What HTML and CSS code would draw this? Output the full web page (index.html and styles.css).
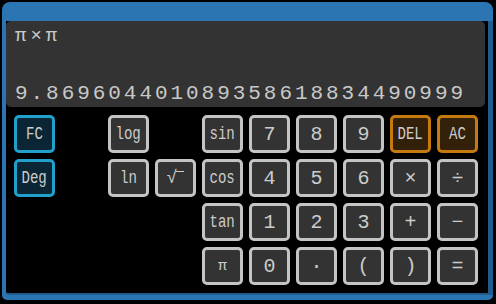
FILE: index.html
```html
<!DOCTYPE html>
<html lang="en">

<head>
    <title>Calculator</title>
    <link rel="stylesheet" href="styles.css">
</head>

<body>

    <div id="window">
        <div id="panel">

            <div id="display">
                <div class="expr">π×π</div>
                <div class="result">9.869604401089358618834490999</div>
            </div>

            <div id="keys">
                <button class="key blue"><span class="word">FC</span></button>
                <button class="key col3"><span class="word">log</span></button>
                <button class="key col5"><span class="word">sin</span></button>
                <button class="key">7</button>
                <button class="key">8</button>
                <button class="key">9</button>
                <button class="key orange"><span class="word">DEL</span></button>
                <button class="key orange"><span class="word">AC</span></button>

                <button class="key blue"><span class="word">Deg</span></button>
                <button class="key col3"><span class="word">ln</span></button>
                <button class="key"><span class="rad">√<span class="bar"></span></span></button>
                <button class="key"><span class="word">cos</span></button>
                <button class="key">4</button>
                <button class="key">5</button>
                <button class="key">6</button>
                <button class="key">×</button>
                <button class="key">÷</button>

                <button class="key col5"><span class="word">tan</span></button>
                <button class="key">1</button>
                <button class="key">2</button>
                <button class="key">3</button>
                <button class="key">+</button>
                <button class="key">−</button>

                <button class="key col5 small">π</button>
                <button class="key">0</button>
                <button class="key">·</button>
                <button class="key">(</button>
                <button class="key">)</button>
                <button class="key">=</button>
            </div>

        </div>
    </div>

</body>
</html>
```

FILE: styles.css
```css
body {
    margin: 0;
    padding: 2px;
    background-color: #000;
    font-family: 'Liberation Mono', 'DejaVu Sans Mono', monospace;
}

#window {
    width: 491px;
    height: 298px;
    box-sizing: border-box;
    padding: 19px 0 5px 4px;
    background-color: #2b76b2;
    border-radius: 8px 8px 5px 5px;
}

#panel {
    height: 100%;
    box-sizing: border-box;
    background-color: #000;
    border-right: 5px solid #1e5c8e;
    border-bottom: 2px solid #1e5c8e;
    border-radius: 0 0 0 3px;
}

#display {
    height: 86px;
    width: 479px;
    box-sizing: border-box;
    padding: 5px 9px 2px;
    background-color: #333;
    border-radius: 5px;
    display: flex;
    flex-direction: column;
    justify-content: space-between;
    color: #c8c8c8;
}

.expr {
    font-size: 19px;
    line-height: 20px;
    letter-spacing: 4px;
}

.result {
    font-size: 21px;
    line-height: 22px;
    letter-spacing: 2.95px;
}

#keys {
    display: grid;
    grid-template-columns: repeat(10, 41px);
    grid-auto-rows: 38px;
    gap: 6px;
    margin: 8px 0 0 8px;
}

.col3 {
    grid-column-start: 3;
}

.col5 {
    grid-column-start: 5;
}

.key {
    box-sizing: border-box;
    width: 41px;
    height: 38px;
    padding: 0;
    background-color: #333;
    border: 3px solid #c4c4c4;
    border-radius: 5px;
    color: #cccccc;
    font-family: 'Liberation Mono', 'DejaVu Sans Mono', monospace;
    font-size: 20px;
    display: flex;
    justify-content: center;
    align-items: center;
}

.key.small {
    font-size: 15px;
}

.word {
    display: inline-block;
    font-size: 19px;
    transform: scaleX(0.74);
}

.blue {
    background-color: #0a2634;
    border-color: #22a0cc;
}

.orange {
    background-color: #33200a;
    border-color: #c57a0e;
}

.rad {
    display: inline-flex;
    align-items: flex-start;
    font-size: 18px;
}

.bar {
    width: 8px;
    margin-top: 3px;
    margin-left: -1px;
    border-top: 1px solid #cccccc;
}
```
